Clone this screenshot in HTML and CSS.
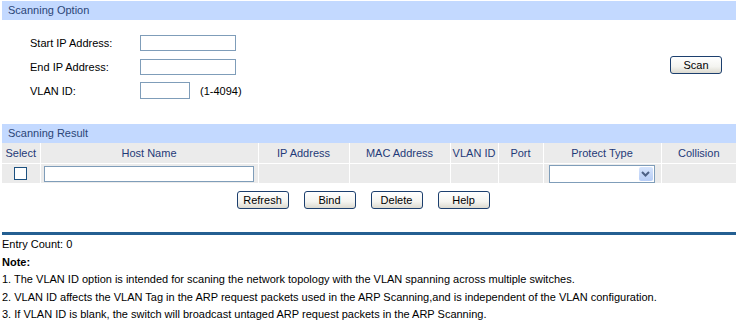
FILE: index.html
```html
<!DOCTYPE html>
<html lang="en">
<head>
    <meta charset="UTF-8">
    <title>ARP Scanning</title>
    <link rel="stylesheet" href="styles.css">
</head>
<body>
    <div class="page">
        <div class="bar">Scanning Option</div>
        <div class="option">
            <div class="fields">
                <label for="startIp">Start IP Address:</label>
                <input type="text" id="startIp" class="txt">

                <label for="endIp">End IP Address:</label>
                <input type="text" id="endIp" class="txt">

                <label for="vlan">VLAN ID:</label>
                <div>
                    <input type="text" id="vlan" class="txt short">
                    <span class="hint">(1-4094)</span>
                </div>
            </div>
            <button class="btn scan">Scan</button>
        </div>

        <div class="bar result-bar">Scanning Result</div>
        <table class="result">
            <colgroup>
                <col style="width:38px">
                <col style="width:218px">
                <col style="width:91px">
                <col style="width:101px">
                <col style="width:48px">
                <col style="width:45px">
                <col style="width:118px">
                <col style="width:75px">
            </colgroup>
            <tr class="head">
                <td>Select</td>
                <td>Host Name</td>
                <td>IP Address</td>
                <td>MAC Address</td>
                <td>VLAN ID</td>
                <td>Port</td>
                <td>Protect Type</td>
                <td>Collision</td>
            </tr>
            <tr>
                <td><input type="checkbox" class="chk"></td>
                <td><input type="text" class="txt host"></td>
                <td></td>
                <td></td>
                <td></td>
                <td></td>
                <td>
                    <div class="select">
                        <span class="arrow">
                            <svg width="9" height="6" viewBox="0 0 9 6"><path d="M1 1 L4.5 4.5 L8 1" fill="none" stroke="#4d6185" stroke-width="2"/></svg>
                        </span>
                    </div>
                </td>
                <td></td>
            </tr>
        </table>

        <div class="actions">
            <button class="btn">Refresh</button>
            <button class="btn">Bind</button>
            <button class="btn">Delete</button>
            <button class="btn">Help</button>
        </div>

        <div class="rule"></div>

        <div class="notes">
            <div>Entry Count: 0</div>
            <div class="note-title">Note:</div>
            <div>1. The VLAN ID option is intended for scaning the network topology with the VLAN spanning across multiple switches.</div>
            <div>2. VLAN ID affects the VLAN Tag in the ARP request packets used in the ARP Scanning,and is independent of the VLAN configuration.</div>
            <div>3. If VLAN ID is blank, the switch will broadcast untaged ARP request packets in the ARP Scanning.</div>
        </div>
    </div>
</body>
</html>
```

FILE: styles.css
```css
body {
    font-family: "Liberation Sans", Arial, sans-serif;
    font-size: 11px;
    color: #000;
    margin: 0;
    padding: 1px 2px 0 2px;
    background: #fff;
}
.page {
    width: 734px;
}
.bar {
    background-color: #c3d9ff;
    color: #2b4677;
    height: 19px;
    line-height: 19px;
    padding-left: 6px;
}
.option {
    display: flex;
    justify-content: space-between;
    align-items: center;
    padding: 11px 14px 0 28px;
}
.fields {
    display: grid;
    grid-template-columns: 110px auto;
    grid-template-rows: 24px 23px 25px;
    align-items: center;
}
.fields > div {
    display: flex;
    align-items: center;
}
.txt {
    box-sizing: border-box;
    width: 96px;
    height: 16px;
    border: 1px solid #7f9db9;
    padding: 0 2px;
    font-family: inherit;
    font-size: 11px;
    margin: 0;
}
.txt.short {
    width: 50px;
    height: 17px;
}
.hint {
    padding-left: 10px;
}
.btn {
    box-sizing: border-box;
    width: 52px;
    height: 18px;
    padding: 0;
    font-family: inherit;
    font-size: 11px;
    color: #000;
    border: 1px solid #1c3f6e;
    border-radius: 3px;
    background: linear-gradient(#ffffff, #f4f4f0 60%, #dcdad0);
    cursor: pointer;
}
.scan {
    margin-bottom: 4px;
}
.result-bar {
    margin-top: 21px;
}
.result {
    width: 734px;
    table-layout: fixed;
    border-collapse: collapse;
}
.result td {
    background-color: #ebebeb;
    border: 1px solid #fff;
    border-top: none;
    height: 19px;
    padding: 0;
    text-align: center;
    vertical-align: middle;
}
.result td:first-child {
    border-left: none;
}
.result td:last-child {
    border-right: none;
}
.head td {
    color: #1f3a78;
    height: 20px;
}
.chk {
    appearance: none;
    box-sizing: border-box;
    width: 13px;
    height: 13px;
    margin: 2px 0 0 0;
    border: 1px solid #1c5180;
    background: #fff;
}
.host {
    width: 210px;
    display: block;
    margin-left: 3px;
}
.select {
    box-sizing: border-box;
    width: 106px;
    height: 18px;
    margin-left: 5px;
    border: 1px solid #7f9db9;
    background: #fff;
    display: flex;
    justify-content: flex-end;
    padding: 1px;
}
.arrow {
    width: 14px;
    display: flex;
    align-items: center;
    justify-content: center;
    background: linear-gradient(#d6e4fc, #b7cdf6);
    border-radius: 2px;
}
.actions {
    display: flex;
    justify-content: center;
    gap: 15px;
    padding: 7px 12px 0 0;
}
.rule {
    height: 3px;
    background-color: #245f92;
    margin-top: 23px;
}
.notes {
    padding-top: 1px;
    line-height: 17.5px;
}
.note-title {
    font-weight: bold;
}
```
